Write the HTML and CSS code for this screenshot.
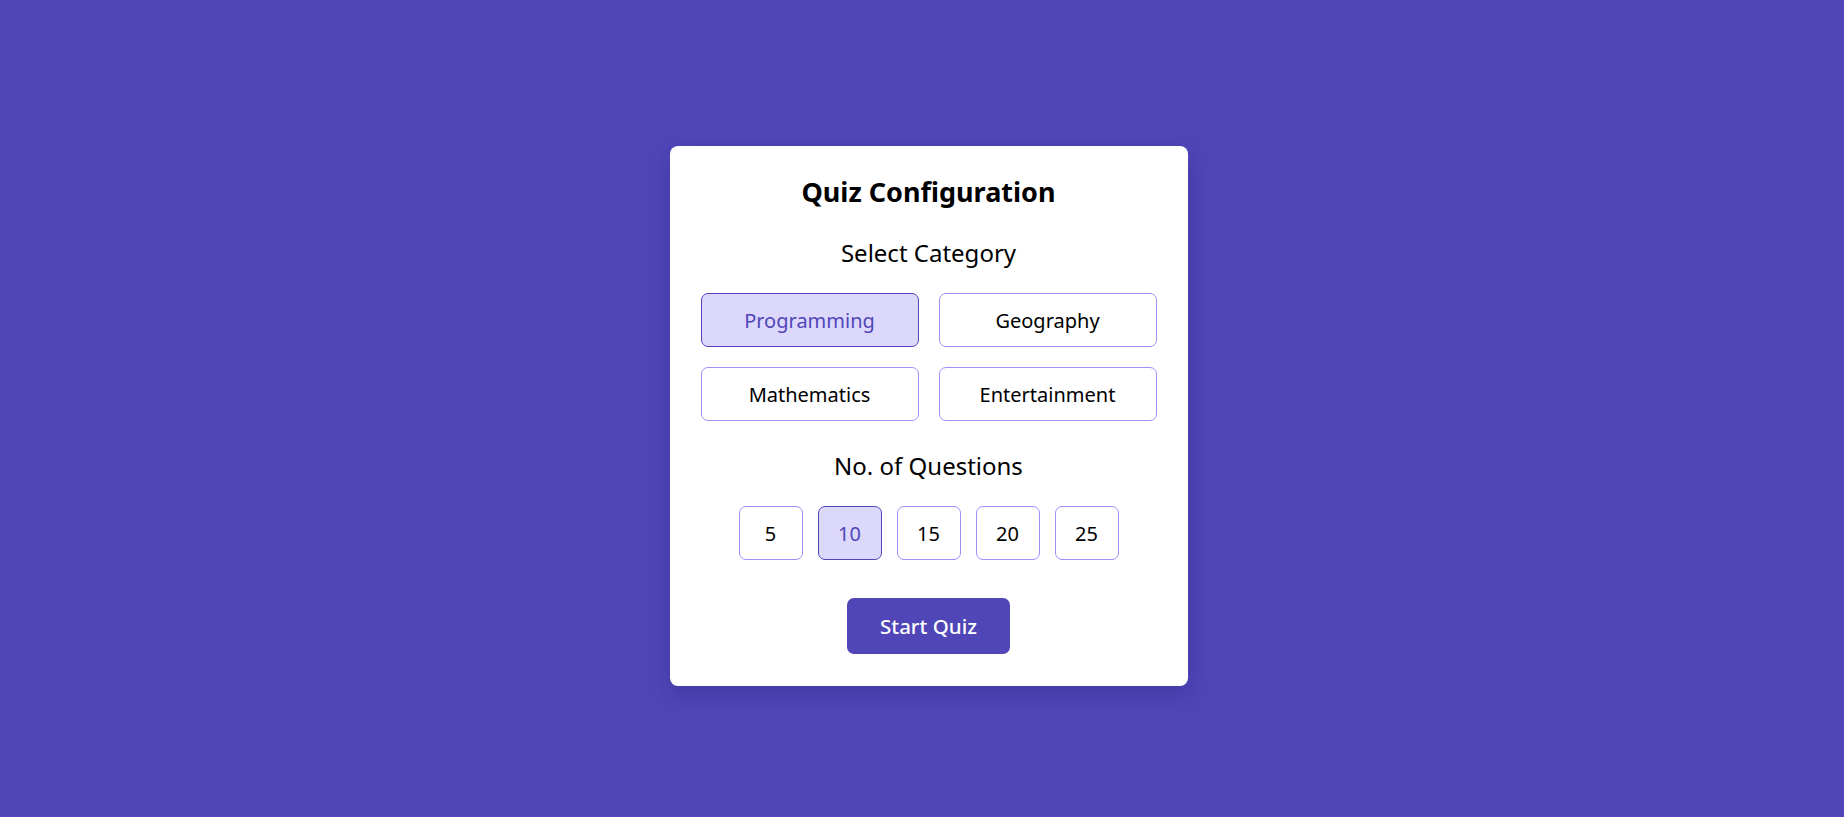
FILE: index.html
```html
<!DOCTYPE html>
<html lang="en">
<head>
<meta charset="utf-8">
<title>Quiz Configuration</title>
<link rel="stylesheet" href="styles.css">
</head>
<body>
<main class="page">
  <section class="card">
    <h1 class="title">Quiz Configuration</h1>
    <h2 class="subtitle">Select Category</h2>
    <div class="category-grid">
      <button class="option option--active">Programming</button>
      <button class="option">Geography</button>
      <button class="option">Mathematics</button>
      <button class="option">Entertainment</button>
    </div>
    <h2 class="subtitle">No. of Questions</h2>
    <div class="count-row">
      <button class="count">5</button>
      <button class="count count--active">10</button>
      <button class="count">15</button>
      <button class="count">20</button>
      <button class="count">25</button>
    </div>
    <button class="start">Start Quiz</button>
  </section>
</main>
</body>
</html>
```

FILE: styles.css
```css
* { box-sizing: border-box; }

html, body {
  margin: 0;
  padding: 0;
}

body {
  background: #5046b8;
  font-family: "Noto Sans", "DejaVu Sans", sans-serif;
  color: #000;
}

.page {
  min-height: 100vh;
  display: flex;
  align-items: center;
  justify-content: center;
  padding: 15px 0 0 13px;
}

.card {
  width: 518px;
  background: #fff;
  border-radius: 8px;
  padding: 30px 31px 32px;
  display: flex;
  flex-direction: column;
  align-items: center;
  box-shadow: 0 8px 24px rgba(20, 10, 80, 0.22);
}

.title {
  margin: 0;
  font-size: 27px;
  line-height: 32px;
  font-weight: 700;
}

.subtitle {
  margin: 30px 0 25px;
  font-size: 24px;
  line-height: 30px;
  font-weight: 400;
}

.category-grid {
  width: 100%;
  display: grid;
  grid-template-columns: 1fr 1fr;
  gap: 20px;
}

.option,
.count {
  font-family: inherit;
  background: #fff;
  border: 1px solid #9d90fb;
  border-radius: 7px;
  color: #000;
  font-size: 20px;
  cursor: pointer;
}

.option {
  height: 54px;
}

.option--active,
.count--active {
  background: #dcd8fc;
  border-color: #5046b8;
  color: #5046b8;
}

.count-row {
  display: flex;
  gap: 15px;
}

.count {
  width: 64px;
  height: 54px;
  padding: 0;
}

.start {
  margin-top: 38px;
  width: 163px;
  height: 56px;
  border: none;
  border-radius: 7px;
  background: #5046b8;
  color: #fff;
  font-family: inherit;
  font-size: 20.5px;
  font-weight: 500;
  cursor: pointer;
}
```
